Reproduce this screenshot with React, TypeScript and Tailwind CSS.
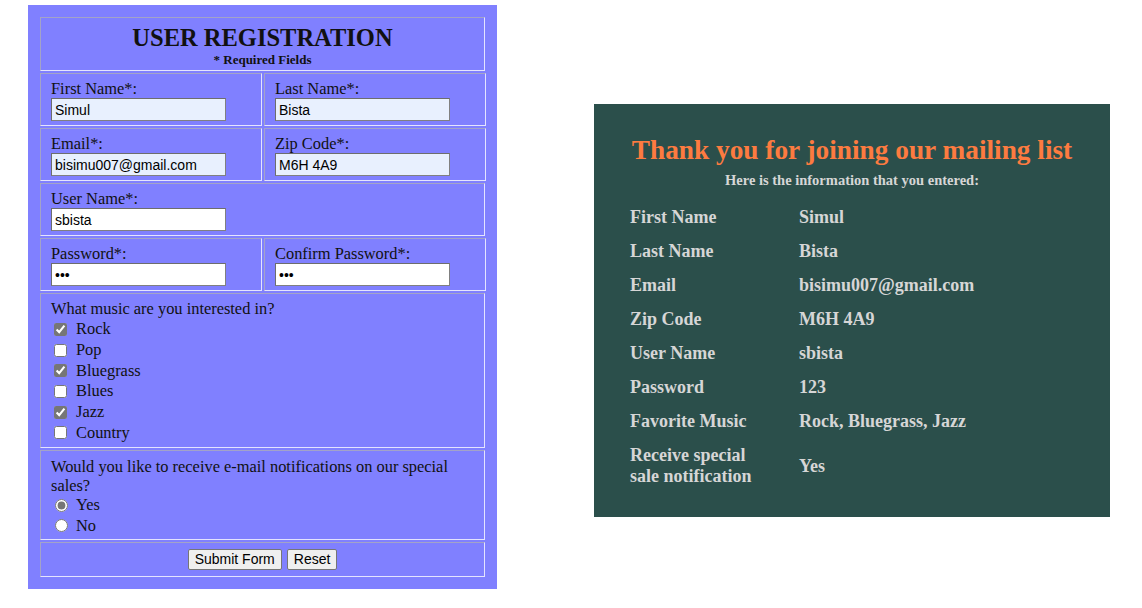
import React from "react";

const cell =
  "border border-t-[#a3a3c8] border-l-[#a3a3c8] border-b-[#e4e4ff] border-r-[#e4e4ff]";

const input =
  "block h-[23px] w-[175px] border border-[#808080] border-t-[#6d6d6d] border-l-[#6d6d6d] px-[3px] text-[14px] text-black outline-none font-['Liberation_Sans',Arial,sans-serif]";

function Field({
  label,
  value,
  type = "text",
  filled = false,
}: {
  label: string;
  value: string;
  type?: string;
  filled?: boolean;
}) {
  return (
    <div className={`${cell} pl-[10px] pt-[6px] pb-[4px]`}>
      <label className="block text-[16.4px] leading-[18px]">{label}</label>
      <input
        type={type}
        defaultValue={value}
        className={`${input} ${filled ? "bg-[#e8f0fe]" : "bg-white"}`}
      />
    </div>
  );
}

const MUSIC = [
  { name: "Rock", checked: true },
  { name: "Pop", checked: false },
  { name: "Bluegrass", checked: true },
  { name: "Blues", checked: false },
  { name: "Jazz", checked: true },
  { name: "Country", checked: false },
];

const SUMMARY = [
  ["First Name", "Simul"],
  ["Last Name", "Bista"],
  ["Email", "bisimu007@gmail.com"],
  ["Zip Code", "M6H 4A9"],
  ["User Name", "sbista"],
  ["Password", "123"],
  ["Favorite Music", "Rock, Bluegrass, Jazz"],
];

export default function App() {
  return (
    <div className="flex h-[608px] w-[1142px] items-start bg-white font-['Liberation_Serif','Times_New_Roman',serif]">
      {/* registration form */}
      <form className="ml-[28px] mt-[5px] w-[469px] bg-[#8080ff] p-[12px] text-[#111]">
        <div className="flex flex-col gap-[2px]">
          <div className={`${cell} flex h-[54px] flex-col items-center pt-[6px]`}>
            <h1 className="text-[24.5px] font-bold leading-[28px]">USER REGISTRATION</h1>
            <p className="text-[13px] font-bold leading-[15px]">* Required Fields</p>
          </div>

          <div className="grid grid-cols-[222px_222px] gap-[2px]">
            <Field label="First Name*:" value="Simul" filled />
            <Field label="Last Name*:" value="Bista" filled />
          </div>
          <div className="grid grid-cols-[222px_222px] gap-[2px]">
            <Field label="Email*:" value="bisimu007@gmail.com" filled />
            <Field label="Zip Code*:" value="M6H 4A9" filled />
          </div>
          <Field label="User Name*:" value="sbista" />
          <div className="grid grid-cols-[222px_222px] gap-[2px]">
            <Field label="Password*:" value="123" type="password" />
            <Field label="Confirm Password*:" value="123" type="password" />
          </div>

          <div className={`${cell} pl-[10px] pt-[6px] pb-[4px]`}>
            <p className="mb-[1px] text-[16.4px] leading-[18px]">
              What music are you interested in?
            </p>
            <div className="flex flex-col">
              {MUSIC.map((m) => (
                <label
                  key={m.name}
                  className="flex h-[20.7px] items-center text-[16.4px] leading-[18px]"
                >
                  <input
                    type="checkbox"
                    defaultChecked={m.checked}
                    className="ml-[3px] mr-[9px] h-[13px] w-[13px] accent-[#767676]"
                  />
                  {m.name}
                </label>
              ))}
            </div>
          </div>

          <div className={`${cell} pl-[10px] pr-[10px] pt-[6px] pb-[3px]`}>
            <p className="text-[16.4px] leading-[19px]">
              Would you like to receive e-mail notifications on our special sales?
            </p>
            {["Yes", "No"].map((o) => (
              <label
                key={o}
                className="flex h-[20.5px] items-center text-[16.4px] leading-[18px]"
              >
                <input
                  type="radio"
                  name="notify"
                  defaultChecked={o === "Yes"}
                  className="ml-[4px] mr-[8px] h-[13px] w-[13px] accent-[#767676]"
                />
                {o}
              </label>
            ))}
          </div>

          <div className={`${cell} flex h-[35px] items-center justify-center gap-[5px]`}>
            <button
              type="button"
              className="h-[21px] rounded-[2px] border border-[#767676] bg-[#efefef] px-[6px] text-[14px] leading-[17px] text-black font-['Liberation_Sans',Arial,sans-serif]"
            >
              Submit Form
            </button>
            <button
              type="reset"
              className="h-[21px] rounded-[2px] border border-[#767676] bg-[#efefef] px-[6px] text-[14px] leading-[17px] text-black font-['Liberation_Sans',Arial,sans-serif]"
            >
              Reset
            </button>
          </div>
        </div>
      </form>

      {/* confirmation panel */}
      <section className="ml-[97px] mt-[104px] h-[413px] w-[516px] bg-[#2b4f4b] pl-[36px] pr-[20px] pt-[30px] text-[#d6d6d6]">
        <div className="flex flex-col items-center pr-[16px]">
          <h2 className="text-[27.3px] font-bold leading-[32px] text-[#fd7b40]">
            Thank you for joining our mailing list
          </h2>
          <p className="mt-[6px] text-[14.5px] font-bold leading-[16px]">
            Here is the information that you entered:
          </p>
        </div>
        <div className="mt-[12px] flex flex-col text-[18px] font-bold">
          {SUMMARY.map(([k, v]) => (
            <div key={k} className="flex h-[34px] items-center">
              <span className="w-[169px]">{k}</span>
              <span>{v}</span>
            </div>
          ))}
          <div className="flex h-[56px] items-center leading-[21px]">
            <span className="w-[169px]">
              Receive special
              <br />
              sale notification
            </span>
            <span>Yes</span>
          </div>
        </div>
      </section>
    </div>
  );
}
